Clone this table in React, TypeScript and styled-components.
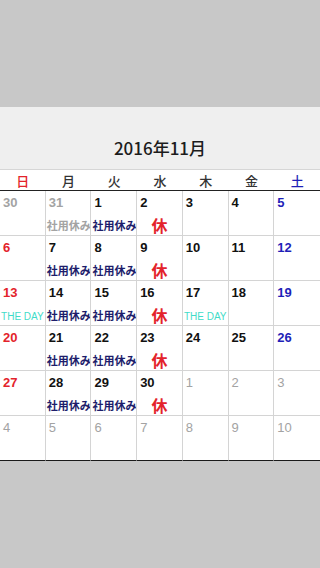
import React from "react";
import styled, { createGlobalStyle } from "styled-components";

type Tone = "sun" | "sat" | "day" | "prev" | "next";
type TagKind = "off" | "holiday" | "theday";

interface Day {
    n: number;
    tone: Tone;
    tag?: TagKind;
}

const weekdays = ["日", "月", "火", "水", "木", "金", "土"];

const toneOf = (col: number): Tone => (col === 0 ? "sun" : col === 6 ? "sat" : "day");

const plain = (nums: number[], tags: (TagKind | undefined)[] = []): Day[] =>
    nums.map((n, i) => ({ n, tone: toneOf(i), tag: tags[i] }));

const weeks: Day[][] = [
    [
        { n: 30, tone: "prev" },
        { n: 31, tone: "prev", tag: "off" },
        { n: 1, tone: "day", tag: "off" },
        { n: 2, tone: "day", tag: "holiday" },
        { n: 3, tone: "day" },
        { n: 4, tone: "day" },
        { n: 5, tone: "sat" },
    ],
    plain([6, 7, 8, 9, 10, 11, 12], [undefined, "off", "off", "holiday"]),
    plain([13, 14, 15, 16, 17, 18, 19], ["theday", "off", "off", "holiday", "theday"]),
    plain([20, 21, 22, 23, 24, 25, 26], [undefined, "off", "off", "holiday"]),
    [
        { n: 27, tone: "sun" },
        { n: 28, tone: "day", tag: "off" },
        { n: 29, tone: "day", tag: "off" },
        { n: 30, tone: "day", tag: "holiday" },
        { n: 1, tone: "next" },
        { n: 2, tone: "next" },
        { n: 3, tone: "next" },
    ],
    [4, 5, 6, 7, 8, 9, 10].map((n) => ({ n, tone: "next" as Tone })),
];

const tagText: Record<TagKind, string> = {
    off: "社用休み",
    holiday: "休",
    theday: "THE DAY",
};

export default function App() {
    return (
        <>
            <GlobalStyle />
            <Page>
                <TopBand />
                <Header>
                    <Title>2016年11月</Title>
                </Header>
                <WeekRow>
                    {weekdays.map((w, i) => (
                        <WeekDay key={w} $tone={toneOf(i)}>
                            {w}
                        </WeekDay>
                    ))}
                </WeekRow>
                <Grid>
                    {weeks.map((week, r) =>
                        week.map((d, c) => (
                            <Cell key={`${r}-${c}`} $lastCol={c === 6} $lastRow={r === weeks.length - 1}>
                                <DayNum $tone={d.tone}>{d.n}</DayNum>
                                {d.tag && (
                                    <Tag $kind={d.tag} $muted={d.tone === "prev"}>
                                        {tagText[d.tag]}
                                    </Tag>
                                )}
                            </Cell>
                        ))
                    )}
                </Grid>
            </Page>
        </>
    );
}

const GlobalStyle = createGlobalStyle`
    html, body {
        margin: 0;
        padding: 0;
        background: #c8c8c8;
        font-family: "Liberation Sans", "Noto Sans CJK JP", sans-serif;
    }
`;

const toneColor: Record<Tone, string> = {
    sun: "#e3232b",
    sat: "#1f1fb8",
    day: "#111111",
    prev: "#a3a3a3",
    next: "#a3a3a3",
};

const Page = styled.div`
    width: 320px;
    display: flex;
    flex-direction: column;
`;

const TopBand = styled.div`
    height: 107px;
`;

const Header = styled.div`
    height: 62px;
    background: #efefef;
    border-bottom: 1px solid #d6d6d6;
    display: flex;
    justify-content: center;
`;

const Title = styled.h1`
    margin: 31px 0 0;
    font-family: "Noto Sans CJK JP", sans-serif;
    font-size: 17px;
    line-height: 20px;
    font-weight: 500;
    color: #1c1c1c;
`;

const WeekRow = styled.div`
    display: grid;
    grid-template-columns: repeat(7, 1fr);
    height: 20px;
    background: #ffffff;
    border-bottom: 1px solid #222;
`;

const WeekDay = styled.div<{ $tone: Tone }>`
    text-align: center;
    font-family: "Noto Sans CJK JP", sans-serif;
    font-size: 13px;
    line-height: 21px;
    font-weight: 500;
    color: ${(p) => (p.$tone === "day" ? "#333" : toneColor[p.$tone])};
`;

const Grid = styled.div`
    display: grid;
    grid-template-columns: repeat(7, 1fr);
    grid-auto-rows: 45px;
    background: #ffffff;
`;

const Cell = styled.div<{ $lastCol: boolean; $lastRow: boolean }>`
    box-sizing: border-box;
    display: flex;
    flex-direction: column;
    min-width: 0;
    overflow: hidden;
    border-right: ${(p) => (p.$lastCol ? "none" : "1px solid #d4d4d4")};
    border-bottom: 1px solid ${(p) => (p.$lastRow ? "#1a1a1a" : "#d4d4d4")};
`;

const DayNum = styled.div<{ $tone: Tone }>`
    padding: 4px 0 0 3px;
    font-size: 13px;
    line-height: 15px;
    font-weight: ${(p) => (p.$tone === "next" ? 400 : 700)};
    color: ${(p) => toneColor[p.$tone]};
`;

const Tag = styled.div<{ $kind: TagKind; $muted: boolean }>`
    margin-top: auto;
    white-space: nowrap;
    text-align: ${(p) => (p.$kind === "off" ? "left" : "center")};
    ${(p) =>
        p.$kind === "off" &&
        `
        padding: 0 0 2px 1px;
        font-size: 11px;
        line-height: 13px;
        font-weight: 700;
        color: ${p.$muted ? "#a3a3a3" : "#1d1d6b"};
    `}
    ${(p) =>
        p.$kind === "holiday" &&
        `
        padding-bottom: 1px;
        font-family: "Noto Sans CJK JP", sans-serif;
        font-size: 16px;
        line-height: 18px;
        font-weight: 700;
        color: #e3232b;
    `}
    ${(p) =>
        p.$kind === "theday" &&
        `
        padding-bottom: 2px;
        font-size: 10px;
        line-height: 12px;
        color: #3fdcc8;
    `}
`;
